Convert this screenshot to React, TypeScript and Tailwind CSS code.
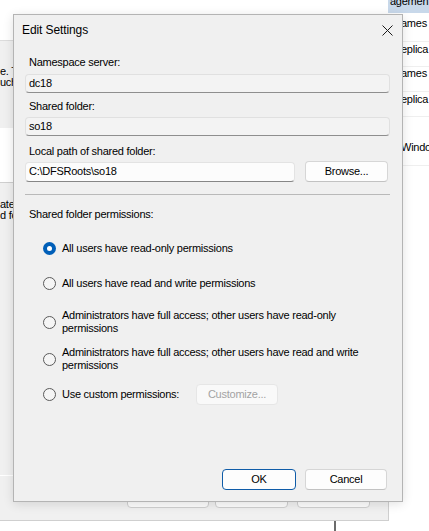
import React from "react";

function Radio({ checked }: { checked?: boolean }) {
  if (checked) {
    return (
      <div className="w-[13px] h-[13px] shrink-0 rounded-full bg-[#005fb8] flex items-center justify-center">
        <div className="w-[5px] h-[5px] rounded-full bg-white" />
      </div>
    );
  }
  return <div className="w-[13px] h-[13px] shrink-0 rounded-full border border-[#5a5a5a] bg-[#f5f5f5]" />;
}

function RadioRow({
  checked,
  children,
  className = "",
}: {
  checked?: boolean;
  children: React.ReactNode;
  className?: string;
}) {
  return (
    <div className={"flex items-center pl-[18px] " + className}>
      <Radio checked={checked} />
      <div className="ml-[6px] leading-[13px]">{children}</div>
    </div>
  );
}

export default function App() {
  return (
    <div className="relative w-[429px] h-[531px] overflow-hidden bg-white font-['Liberation_Sans',Arial,sans-serif] text-[11px] tracking-[-0.25px] text-black">
      {/* ---------- background window ---------- */}
      <div className="absolute left-0 top-[40px] w-[60px] h-[88px] bg-[#f0f0f0] border-t border-[#dcdcdc]" />
      <div className="absolute left-0 top-[66px] leading-[11px] whitespace-nowrap">
        <div>e. T</div>
        <div>uch</div>
      </div>
      <div className="absolute left-0 top-[182px] w-[389px] h-[339px] bg-[#f0f0f0] border-t border-r border-b border-[#cfcfcf]" />
      <div className="absolute left-0 top-[199px] leading-[11px] whitespace-nowrap">
        <div>ate</div>
        <div>d fo</div>
      </div>
      <div className="absolute left-0 top-[475px] w-[20px] h-px bg-white" />
      <div className="absolute left-[127px] top-[478px] w-[82px] h-[30px] bg-[#fdfdfd] border border-[#cfcfcf] rounded-[4px]" />
      <div className="absolute left-[215px] top-[478px] w-[73px] h-[30px] bg-[#fdfdfd] border border-[#cfcfcf] rounded-[4px]" />
      <div className="absolute left-[297px] top-[478px] w-[73px] h-[30px] bg-[#fdfdfd] border border-[#cfcfcf] rounded-[4px]" />
      <div className="absolute left-[334px] top-[521px] w-[2px] h-[10px] bg-[#6b6b6b]" />

      {/* right list */}
      <div className="absolute left-[388px] top-0 w-[41px] h-[13px] bg-[#c8d8ea] overflow-hidden">
        <div className="mt-[-6px] ml-[2px] whitespace-nowrap leading-[14px]">agemen</div>
      </div>
      <div className="absolute left-[401px] top-[17px] w-[40px] whitespace-nowrap leading-[13px]">
        <div className="h-[25px] border-b border-[#efefef]">ames</div>
        <div className="h-[25px] pt-[1px] border-b border-[#efefef]">eplica</div>
        <div className="h-[25px] border-b border-[#efefef]">ames</div>
        <div className="h-[25px] pt-[1px] border-b border-[#efefef]">eplica</div>
        <div className="h-[24px]" />
        <div className="h-[25px] border-b border-[#efefef]">Windo</div>
      </div>

      {/* ---------- dialog ---------- */}
      <div className="absolute left-[13px] top-[14px] w-[390px] h-[488px] bg-[#f0f0f0] border border-[#b4b4b4] shadow-[0_2px_10px_rgba(0,0,0,0.12)] flex flex-col">
        <div className="h-[30px] flex items-center justify-between pl-[8px] pr-[9px] shrink-0">
          <span className="text-[12px] tracking-[-0.1px]">Edit Settings</span>
          <svg width="11" height="11" viewBox="0 0 11 11">
            <path d="M0.5 0.5 L10.5 10.5 M10.5 0.5 L0.5 10.5" stroke="#1b1b1b" strokeWidth="1" fill="none" />
          </svg>
        </div>

        <div className="flex flex-col flex-1 pl-[11px] pr-[12px] pb-[11px]">
          <div className="mt-[10px] pl-[4px] leading-[14px]">Namespace server:</div>
          <div className="mt-[5px] h-[19px] rounded-[4px] border border-[#e0e0e0] border-b-[#8e8e8e] bg-[#f3f3f3] pl-[3px] flex items-center">
            dc18
          </div>

          <div className="mt-[6px] pl-[4px] leading-[14px]">Shared folder:</div>
          <div className="mt-[4px] h-[19px] rounded-[4px] border border-[#e0e0e0] border-b-[#8e8e8e] bg-[#f3f3f3] pl-[3px] flex items-center">
            so18
          </div>

          <div className="mt-[8px] pl-[4px] leading-[14px]">Local path of shared folder:</div>
          <div className="mt-[3px] flex items-center gap-[10px]">
            <div className="w-[270px] h-[20px] rounded-[4px] border border-[#e3e3e3] border-b-[#868686] bg-[#fcfcfc] pl-[3px] flex items-center">
              C:\DFSRoots\so18
            </div>
            <div className="w-[83px] h-[21px] rounded-[4px] border border-[#d6d6d6] border-b-[#c2c2c2] bg-[#fdfdfd] flex items-center justify-center">
              Browse...
            </div>
          </div>

          <div className="mt-[12px] h-px bg-[#b9b9b9]" />

          <div className="mt-[12px] pl-[4px] leading-[14px]">Shared folder permissions:</div>

          <RadioRow checked className="mt-[20px] h-[14px]">
            All users have read-only permissions
          </RadioRow>
          <RadioRow className="mt-[21px] h-[14px]">
            All users have read and write permissions
          </RadioRow>
          <RadioRow className="mt-[19px]">
            <div>Administrators have full access; other users have read-only</div>
            <div>permissions</div>
          </RadioRow>
          <RadioRow className="mt-[11px]">
            <div>Administrators have full access; other users have read and write</div>
            <div>permissions</div>
          </RadioRow>
          <div className="mt-[12px] flex items-center pl-[18px] h-[21px]">
            <Radio />
            <div className="ml-[6px] w-[134px]">Use custom permissions:</div>
            <div className="w-[82px] h-[21px] rounded-[4px] border border-[#e6e6e6] bg-[#f9f9f9] text-[#a3a3a3] flex items-center justify-center">
              Customize...
            </div>
          </div>

          <div className="flex-1" />

          <div className="flex justify-end gap-[9px] pr-[3px]">
            <div className="w-[74px] h-[21px] rounded-[4px] border border-[#0f5ca8] bg-[#fdfdfd] flex items-center justify-center">
              OK
            </div>
            <div className="w-[82px] h-[21px] rounded-[4px] border border-[#d6d6d6] border-b-[#c2c2c2] bg-[#fdfdfd] flex items-center justify-center">
              Cancel
            </div>
          </div>
        </div>
      </div>
    </div>
  );
}
